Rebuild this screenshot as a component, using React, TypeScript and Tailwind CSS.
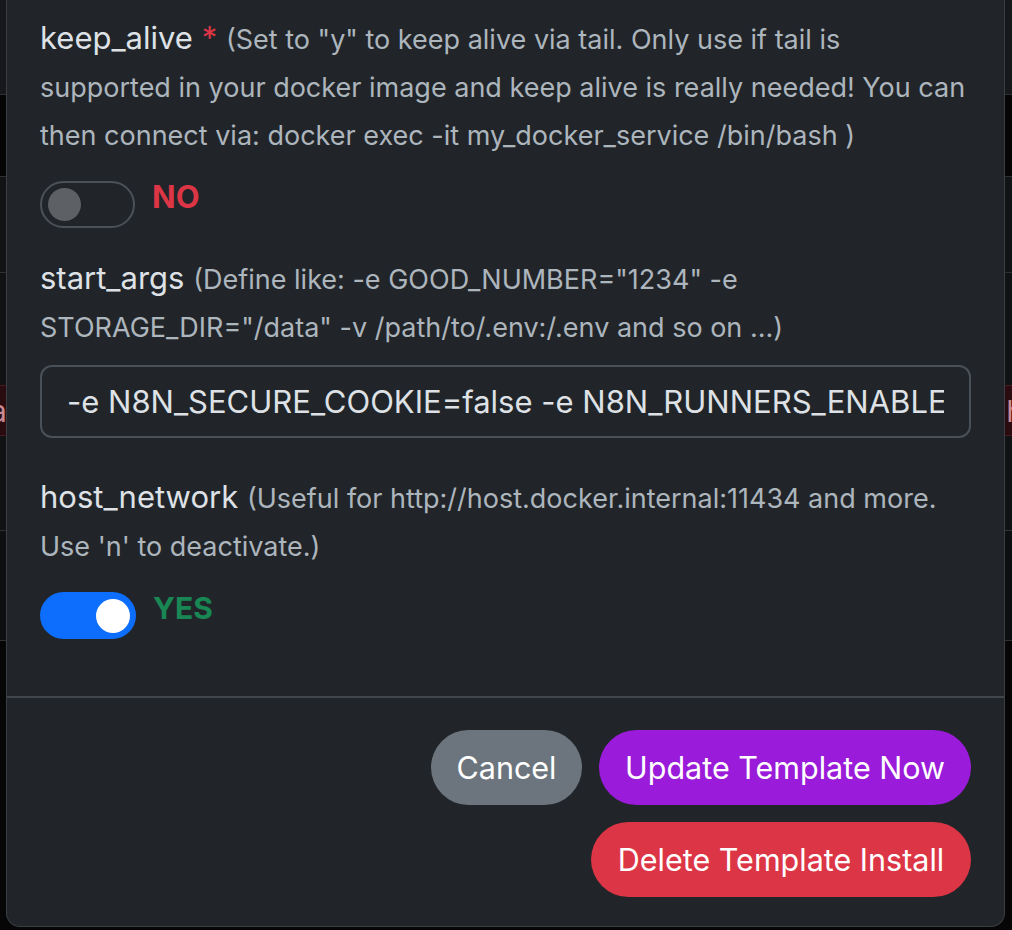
import React from 'react';

const font = { fontFamily: 'Inter, "Noto Sans", Arial, sans-serif' };

function Switch({ on }: { on: boolean }) {
  if (on) {
    return (
      <div className="mt-[1px] w-[96px] h-[47px] rounded-full bg-[#0d6efd] flex items-center justify-end pr-[6px]">
        <div className="w-[34px] h-[34px] rounded-full bg-white"></div>
      </div>
    );
  }
  return (
    <div className="mt-[1px] w-[95px] h-[47px] rounded-full border-2 border-[#4b5157] flex items-center pl-[6px]">
      <div className="w-[33px] h-[33px] rounded-full bg-[#5d6166]"></div>
    </div>
  );
}

export default function App() {
  return (
    <div className="relative w-full h-[930px] overflow-hidden bg-[#060606]" style={font}>
      {/* page behind the modal */}
      <div className="flex flex-col">
        <div className="h-[95px] bg-[#16181b] border-b border-[#2e3034]"></div>
        <div className="h-[82px] bg-[#050505] border-b border-[#2e3034]"></div>
        <div className="h-[96px] bg-[#121315] border-b border-[#2e3034]"></div>
        <div className="h-[112px] bg-[#111214]"></div>
        <div className="h-[51px] bg-[#2a0b10] border-y border-[#4a1a22] flex items-center justify-between text-[30px] text-[#c98a94] leading-none">
          <span className="-ml-[10px]">a</span>
          <span className="-mr-[12px]">h</span>
        </div>
        <div className="h-[95px] bg-[#111214] border-b border-[#2e3034]"></div>
        <div className="h-[110px] bg-[#0e0f11] border-b border-[#2e3034]"></div>
      </div>

      {/* modal */}
      <div className="absolute left-[6px] right-[7px] top-0 bg-[#212529] border-x border-b border-[#3a3e43] rounded-b-[14px]">
        <div className="px-[33px] pt-[14px] pb-[57px]">
          <div className="text-[31px] leading-[48px] text-[#dee2e6] whitespace-nowrap">
            keep_alive <span className="text-[#dc3545]">*</span>{' '}
            <span className="text-[27px] leading-none text-[#adb5bd]">
              (Set to "y" to keep alive via tail. Only use if tail is
              <br />
              supported in your docker image and keep alive is really needed! You can
              <br />
              then connect via: docker exec -it my_docker_service /bin/bash )
            </span>
          </div>

          <div className="mt-[22px] h-[48px] flex items-start gap-[17px]">
            <Switch on={false} />
            <span className="text-[31px] leading-[34px] font-bold text-[#dc3545]">NO</span>
          </div>

          <div className="mt-[26px] text-[31px] leading-[48px] text-[#dee2e6] whitespace-nowrap">
            start_args{' '}
            <span className="text-[27px] leading-none text-[#adb5bd]">
              (Define like: -e GOOD_NUMBER="1234" -e
              <br />
              STORAGE_DIR="/data" -v /path/to/.env:/.env and so on ...)
            </span>
          </div>

          <input
            readOnly
            value="-e N8N_SECURE_COOKIE=false -e N8N_RUNNERS_ENABLED=true"
            className="mt-[15px] block w-full h-[73px] rounded-[12px] border-2 border-[#495057] bg-[#212529] px-[25px] text-[31px] text-[#dee2e6] outline-none"
            style={font}
          />

          <div className="mt-[35px] text-[31px] leading-[48px] text-[#dee2e6] whitespace-nowrap">
            host_network{' '}
            <span className="text-[27px] leading-none text-[#adb5bd]">
              (Useful for http://host.docker.internal:11434 and more.
              <br />
              Use 'n' to deactivate.)
            </span>
          </div>

          <div className="mt-[22px] h-[48px] flex items-start gap-[17px]">
            <Switch on={true} />
            <span className="text-[30px] leading-[34px] font-bold text-[#198754]">YES</span>
          </div>
        </div>

        <div className="border-t-2 border-[#41464c] px-[33px] pt-[32px] pb-[29px] flex flex-col items-end gap-[17px]">
          <div className="flex gap-[17px]">
            <button className="w-[151px] h-[75px] rounded-full bg-[#6c757d] text-white text-[30.5px]" style={font}>
              Cancel
            </button>
            <button className="w-[372px] h-[75px] rounded-full bg-[#9a1bd9] text-white text-[30.5px]" style={font}>
              Update Template Now
            </button>
          </div>
          <button className="w-[380px] h-[75px] rounded-full bg-[#dc3545] text-white text-[30.5px]" style={font}>
            Delete Template Install
          </button>
        </div>
      </div>
    </div>
  );
}
